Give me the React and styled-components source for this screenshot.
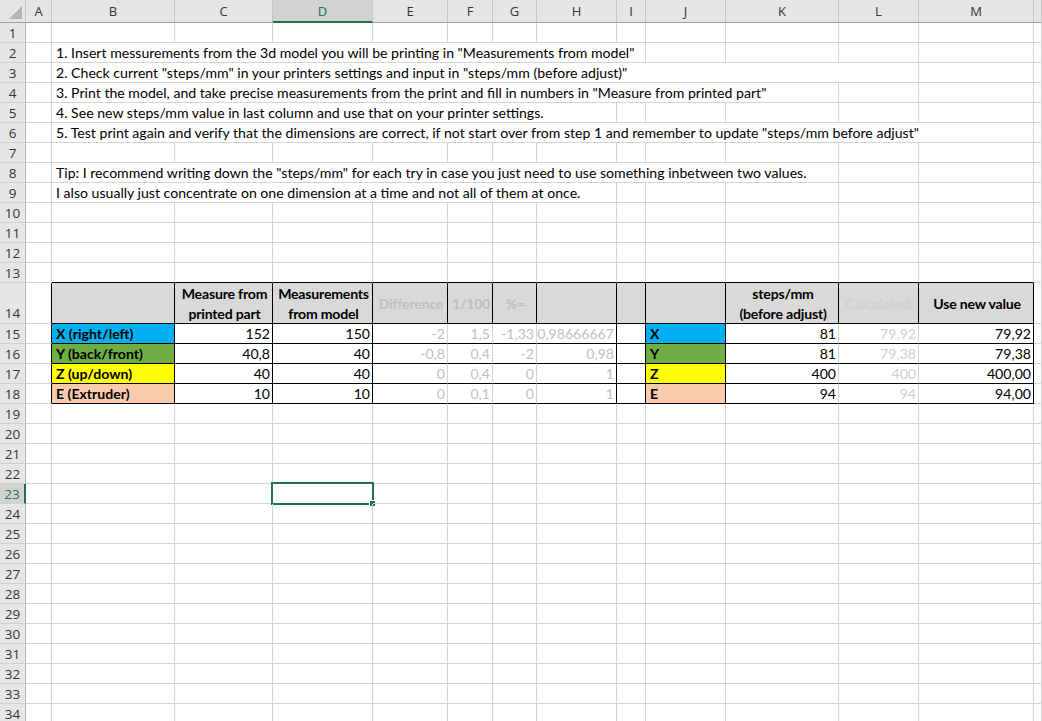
import React from "react";
import styled, { createGlobalStyle } from "styled-components";

const GlobalStyle = createGlobalStyle`
  html, body {
    margin: 0;
    padding: 0;
    background: #ffffff;
    overflow: hidden;
  }
`;

const GRID = "#d4d4d4";
const BLACK = "#000000";
const GREEN = "#217346";

const COLS = [
  { key: "A", w: 26 },
  { key: "B", w: 123 },
  { key: "C", w: 98 },
  { key: "D", w: 100 },
  { key: "E", w: 75 },
  { key: "F", w: 45 },
  { key: "G", w: 44 },
  { key: "H", w: 80 },
  { key: "I", w: 29 },
  { key: "J", w: 80 },
  { key: "K", w: 113 },
  { key: "L", w: 80 },
  { key: "M", w: 115 },
];

const ROW_COUNT = 34;

const Sheet = styled.div`
  display: grid;
  grid-template-columns: 26px ${COLS.map((c) => `${c.w}px`).join(" ")} 1fr;
  grid-template-rows: 23px repeat(13, 20px) 41px repeat(20, 20px);
  width: 1042px;
  height: 721px;
  overflow: hidden;
  font-family: "Lato", "Open Sans", sans-serif;
  font-size: 14.1px;
  color: #000;
`;

const Corner = styled.div`
  position: relative;
  background: #e6e6e6;
  border-right: 1px solid #c6c6c6;
  border-bottom: 1px solid #9e9e9e;
  box-sizing: border-box;
`;

const CornerMark = styled.svg`
  position: absolute;
  right: 3px;
  bottom: 3px;
`;

const ColHeader = styled.div`
  display: flex;
  align-items: center;
  justify-content: center;
  box-sizing: border-box;
  background: ${(p) => (p.$active ? "#d2d2d2" : "#e6e6e6")};
  color: ${(p) => (p.$active ? GREEN : "#333")};
  border-right: 1px solid #c6c6c6;
  border-bottom: ${(p) => (p.$active ? `2px solid ${GREEN}` : "1px solid #9e9e9e")};
  font-family: "Open Sans", "Noto Sans", sans-serif;
  font-size: 13px;
  padding-top: ${(p) => (p.$active ? "1px" : "0")};
`;

const RowHeader = styled.div`
  display: flex;
  align-items: center;
  justify-content: center;
  box-sizing: border-box;
  background: ${(p) => (p.$active ? "#d2d2d2" : "#e6e6e6")};
  color: ${(p) => (p.$active ? GREEN : "#333")};
  border-right: ${(p) => (p.$active ? `2px solid ${GREEN}` : "1px solid #b5b5b5")};
  border-bottom: 1px solid #d0d0d0;
  font-family: "Open Sans", "Noto Sans", sans-serif;
  font-size: 13.5px;
  padding-top: ${(p) => (p.$tall ? "20px" : "0")};
`;

const Cell = styled.div`
  position: relative;
  box-sizing: border-box;
  display: flex;
  align-items: center;
  justify-content: ${(p) =>
    p.$align === "right" ? "flex-end" : p.$align === "center" ? "center" : "flex-start"};
  text-align: ${(p) => p.$align || "left"};
  grid-column: span ${(p) => p.$span || 1};
  padding: 0 2px 0 4px;
  background: ${(p) => p.$bg || "transparent"};
  color: ${(p) => p.$color || "#000"};
  font-weight: ${(p) => (p.$bold ? 700 : 400)};
  border-right: 1px solid ${(p) => p.$right || GRID};
  border-bottom: 1px solid ${(p) => p.$bottom || GRID};
  white-space: nowrap;
  line-height: 19px;
  overflow: visible;
`;

const HeadText = styled.span`
  display: block;
  text-align: center;
  width: 100%;
  line-height: 19.5px;
  padding-top: 1px;
  letter-spacing: -0.2px;
`;

const Selection = styled.div`
  position: absolute;
  left: -2px;
  top: -2px;
  right: -2px;
  bottom: -2px;
  border: 2px solid ${GREEN};
  pointer-events: none;
`;

const FillHandle = styled.div`
  position: absolute;
  right: -4px;
  bottom: -4px;
  width: 5px;
  height: 5px;
  background: ${GREEN};
  border: 1px solid #fff;
`;

// instruction rows: text in column B spilling over to the right
const NOTES = {
  2: { span: 8, text: '1. Insert messurements from the 3d model you will be printing in "Measurements from model"' },
  3: { span: 11, text: '2. Check current "steps/mm" in your printers settings and input in "steps/mm (before adjust)"' },
  4: { span: 10, text: '3. Print the model, and take precise measurements from the print and fill in numbers in "Measure from printed part"' },
  5: { span: 7, text: "4. See new steps/mm value in last column and use that on your printer settings." },
  6: { span: 12, text: '5. Test print again and verify that the dimensions are correct, if not start over from step 1 and remember to update "steps/mm before adjust"' },
  8: { span: 10, text: 'Tip: I recommend writing down the "steps/mm" for each try in case you just need to use something inbetween two values.' },
  9: { span: 7, text: "I also usually just concentrate on one dimension at a time and not all of them at once." },
};

const FADED = "#bfbfbf";
const PALE = "#d0d0d0";

const HEAD = {
  B: null,
  C: { lines: ["Measure from", "printed part"] },
  D: { lines: ["Measurements", "from model"] },
  E: { lines: ["Difference"], color: FADED },
  F: { lines: ["1/100"], color: FADED },
  G: { lines: ["%="], color: FADED },
  H: null,
  I: null,
  J: null,
  K: { lines: ["steps/mm", "(before adjust)"] },
  L: { lines: ["Calculated:"], color: PALE },
  M: { lines: ["Use new value"] },
};

const AXES = [
  { row: 15, label: "X (right/left)", short: "X", bg: "#00b0f0", vals: ["152", "150", "-2", "1,5", "-1,33", "0,98666667", "81", "79,92", "79,92"] },
  { row: 16, label: "Y (back/front)", short: "Y", bg: "#70ad47", vals: ["40,8", "40", "-0,8", "0,4", "-2", "0,98", "81", "79,38", "79,38"] },
  { row: 17, label: "Z (up/down)", short: "Z", bg: "#ffff00", vals: ["40", "40", "0", "0,4", "0", "1", "400", "400", "400,00"] },
  { row: 18, label: "E (Extruder)", short: "E", bg: "#f8cbad", vals: ["10", "10", "0", "0,1", "0", "1", "94", "94", "94,00"] },
];

const TABLE_COLS = "BCDEFGHIJKLM";
const SOFT_RIGHT = "EFGKL";

function borderRight(row, col) {
  if (row < 14 || row > 18) return GRID;
  if (col === "A") return BLACK;
  if (!TABLE_COLS.includes(col)) return GRID;
  if (row === 14) return BLACK;
  return SOFT_RIGHT.includes(col) ? GRID : BLACK;
}

function borderBottom(row, col) {
  if (row >= 13 && row <= 18 && TABLE_COLS.includes(col)) return BLACK;
  return GRID;
}

function headerCell(row, col) {
  const h = HEAD[col];
  return (
    <Cell
      key={col}
      $bg="#d9d9d9"
      $bold
      $align="center"
      $color={h && h.color}
      $right={borderRight(row, col)}
      $bottom={borderBottom(row, col)}
    >
      {h && (
        <HeadText>
          {h.lines.map((l, i) => (
            <React.Fragment key={i}>
              {i > 0 && <br />}
              {l}
            </React.Fragment>
          ))}
        </HeadText>
      )}
    </Cell>
  );
}

function dataCell(row, col, axis) {
  const common = {
    key: col,
    $right: borderRight(row, col),
    $bottom: borderBottom(row, col),
  };
  const idx = "CDEFGH".indexOf(col);
  if (col === "B") return <Cell {...common} $bg={axis.bg} $bold>{axis.label}</Cell>;
  if (col === "J") return <Cell {...common} $bg={axis.bg} $bold>{axis.short}</Cell>;
  if (idx >= 0) {
    return (
      <Cell {...common} $align="right" $color={idx >= 2 ? FADED : "#000"}>
        {axis.vals[idx]}
      </Cell>
    );
  }
  if (col === "K") return <Cell {...common} $align="right">{axis.vals[6]}</Cell>;
  if (col === "L") return <Cell {...common} $align="right" $color={PALE}>{axis.vals[7]}</Cell>;
  if (col === "M") return <Cell {...common} $align="right">{axis.vals[8]}</Cell>;
  return <Cell {...common} />;
}

function renderRow(row) {
  const cells = [];
  const note = NOTES[row];
  const axis = AXES.find((a) => a.row === row);
  let i = 0;
  while (i < COLS.length) {
    const col = COLS[i].key;
    if (note && col === "B") {
      cells.push(
        <Cell key={col} $span={note.span} $right={GRID} $bottom={GRID}>
          {note.text}
        </Cell>
      );
      i += note.span;
      continue;
    }
    if (row === 14 && TABLE_COLS.includes(col)) {
      cells.push(headerCell(row, col));
    } else if (axis && TABLE_COLS.includes(col)) {
      cells.push(dataCell(row, col, axis));
    } else {
      cells.push(
        <Cell key={col} $right={borderRight(row, col)} $bottom={borderBottom(row, col)}>
          {row === 23 && col === "D" && (
            <Selection>
              <FillHandle />
            </Selection>
          )}
        </Cell>
      );
    }
    i += 1;
  }
  cells.push(<Cell key="rest" $bottom={GRID} />);
  return cells;
}

export default function App() {
  const rows = Array.from({ length: ROW_COUNT }, (_, i) => i + 1);
  return (
    <>
      <GlobalStyle />
      <Sheet>
        <Corner>
          <CornerMark width="13" height="13" viewBox="0 0 13 13">
            <polygon points="13,0 13,13 0,13" fill="#b4b4b4" />
          </CornerMark>
        </Corner>
        {COLS.map((c) => (
          <ColHeader key={c.key} $active={c.key === "D"}>
            {c.key}
          </ColHeader>
        ))}
        <ColHeader />
        {rows.map((r) => (
          <React.Fragment key={r}>
            <RowHeader $active={r === 23} $tall={r === 14}>
              {r}
            </RowHeader>
            {renderRow(r)}
          </React.Fragment>
        ))}
      </Sheet>
    </>
  );
}
